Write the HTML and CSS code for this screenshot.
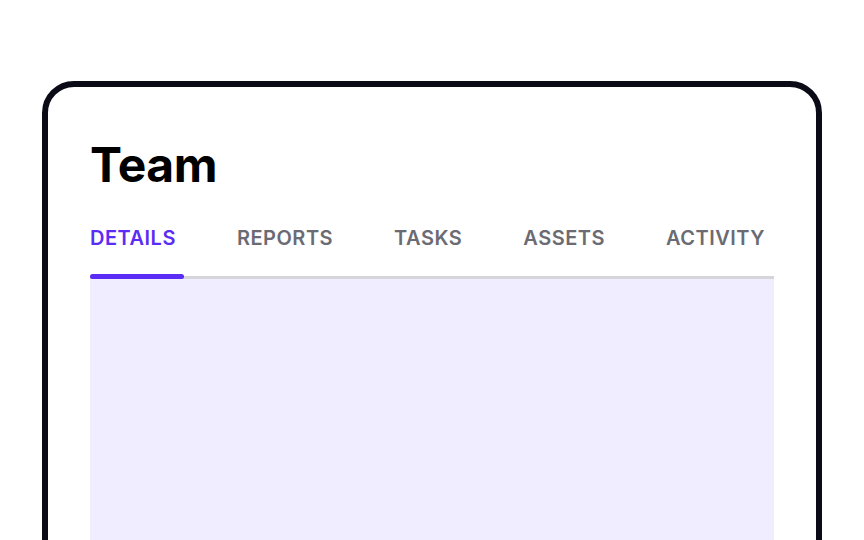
FILE: index.html
```html
<!DOCTYPE html>
<html lang="en">
<head>
<meta charset="utf-8">
<title>Team</title>
<link rel="stylesheet" href="styles.css">
</head>
<body>
<div class="card">
  <h1 class="title">Team</h1>
  <nav class="tabs">
    <span class="tab active">DETAILS</span>
    <span class="tab">REPORTS</span>
    <span class="tab">TASKS</span>
    <span class="tab">ASSETS</span>
    <span class="tab">ACTIVITY</span>
  </nav>
  <div class="panel"></div>
</div>
</body>
</html>
```
FILE: styles.css
```css
html, body {
  margin: 0;
  padding: 0;
  background: #ffffff;
  overflow: hidden;
}
body {
  font-family: Inter, "Noto Sans", sans-serif;
  height: 540px;
}
.card {
  box-sizing: border-box;
  margin: 81px 0 0 42px;
  width: 780px;
  height: 600px;
  border: 6px solid #0b0b18;
  border-radius: 32px;
  padding: 49px 42px 0 42px;
  display: flex;
  flex-direction: column;
}
.title {
  margin: 0;
  font-size: 48px;
  font-weight: 700;
  line-height: 58px;
  color: #000000;
  letter-spacing: -0.5px;
}
.tabs {
  margin-top: 31px;
  display: flex;
  gap: 54px;
  border-bottom: 3px solid #d6d6da;
}
.tab {
  position: relative;
  padding: 0 7px 25px 0;
  font-size: 20px;
  font-weight: 600;
  line-height: 26px;
  letter-spacing: 0.5px;
  color: #6b6b73;
}
.tab.active {
  color: #5b2cf5;
}
.tab.active::after {
  content: "";
  position: absolute;
  left: 0;
  right: -1px;
  bottom: -3px;
  height: 5px;
  border-radius: 3px;
  background: #5b2cf5;
}
.panel {
  flex: 1;
  background: #efedff;
}
```
